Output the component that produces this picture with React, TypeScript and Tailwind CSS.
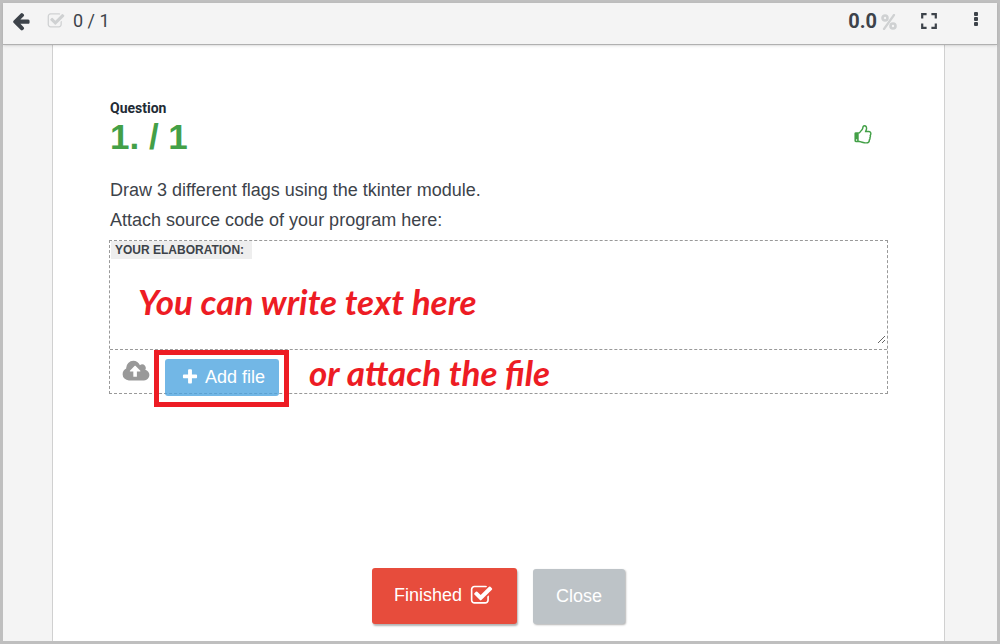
import type { ReactNode } from 'react';

const paths = {
  check:
    'M1472 930v318q0 119-84.5 203.5t-203.5 84.5h-832q-119 0-203.5-84.5t-84.5-203.5v-832q0-119 84.5-203.5t203.5-84.5h832q63 0 117 25 15 7 18 23 3 17-9 29l-49 49q-10 10-23 10-3 0-9-2-23-6-45-6h-832q-66 0-113 47t-47 113v832q0 66 47 113t113 47h832q66 0 113-47t47-113v-254q0-13 9-22l64-64q10-10 23-10 6 0 12 3 20 8 20 29zm231-489l-814 814q-24 24-57 24t-57-24l-430-430q-24-24-24-57t24-57l110-110q24-24 57-24t57 24l263 263 647-647q24-24 57-24t57 24l110 110q24 24 24 57t-24 57z',
  back: 'M1664 896v128q0 53-32.5 90.5t-84.5 37.5h-704l293 294q38 36 38 90t-38 90l-75 76q-37 37-90 37-52 0-91-37l-651-652q-37-37-37-90 0-52 37-91l651-650q38-38 91-38 52 0 90 38l75 74q38 38 38 91t-38 91l-293 293h704q52 0 84.5 37.5t32.5 90.5z',
  thumb:
    'M384 1344q0-26-19-45t-45-19-45 19-19 45 19 45 45 19 45-19 19-45zm1152-576q0-51-39-89.5t-89-38.5h-352q0-58 48-159.5t48-160.5q0-98-32-145t-128-47q-26 26-38 85t-30.5 125.5-59.5 109.5q-22 23-77 91-4 5-23 30t-31.5 41-34.5 42.5-40 44-38.5 35.5-40 27-35.5 9h-32v640h32q13 0 31.5 3t33 6.5 38 11 35 11.5 35.5 12.5 29 10.5q211 73 342 73h121q192 0 192-167 0-26-5-56 30-16 47.5-52.5t17.5-73.5-18-69q53-50 53-119 0-25-10-55.5t-25-47.5q32-1 53.5-47t21.5-81zm128-1q0 89-49 163 9 33 9 69 0 77-38 144 3 21 3 43 0 101-60 178 1 139-85 219.5t-227 80.5h-129q-96 0-189.5-22.5t-216.5-65.5q-116-40-138-40h-288q-53 0-90.5-37.5t-37.5-90.5v-640q0-53 37.5-90.5t90.5-37.5h274q36-24 137-155 58-75 107-128 24-25 35.5-85.5t30.5-126.5 62-108q39-37 90-37 84 0 151 32.5t102 101.5 35 186q0 93-48 192h176q104 0 180 76t76 179z',
  plus: 'M1600 736v192q0 40-28 68t-68 28h-416v416q0 40-28 68t-68 28h-192q-40 0-68-28t-28-68v-416h-416q-40 0-68-28t-28-68v-192q0-40 28-68t68-28h416v-416q0-40 28-68t68-28h192q40 0 68 28t28 68v416h416q40 0 68 28t28 68z',
  cloud:
    'M1216 864q0-14-9-23l-352-352q-9-9-23-9t-23 9l-351 351q-10 12-10 24 0 14 9 23t23 9h224v352q0 13 9.5 22.5t22.5 9.5h192q13 0 22.5-9.5t9.5-22.5v-352h224q13 0 22.5-9.5t9.5-22.5zm640 288q0 159-112.5 271.5t-271.5 112.5h-1088q-185 0-316.5-131.5t-131.5-316.5q0-130 70-240t188-165q-2-30-2-43 0-212 150-362t362-150q156 0 285.5 87t188.5 231q71-62 166-62 106 0 181 75t75 181q0 76-41 138 130 31 213.5 135.5t83.5 238.5z',
};

function Icon({ d, className, viewBox = '0 0 1792 1792' }: { d: string; className: string; viewBox?: string }) {
  return (
    <svg viewBox={viewBox} fill="currentColor" aria-hidden="true" className={className}>
      <path d={d} />
    </svg>
  );
}

function IconButton({ label, children }: { label: string; children: ReactNode }) {
  return (
    <button type="button" aria-label={label} className="flex cursor-pointer items-center">
      {children}
    </button>
  );
}

function Header() {
  return (
    <header className="z-10 flex h-[42px] items-center border-b border-[#b0b0b0] bg-[#f4f4f4] pr-[18px] pb-1.5 pl-2 text-[#3d434a] shadow-sm">
      <IconButton label="Back">
        <Icon d={paths.back} className="size-5" />
      </IconButton>
      <div className="ml-4 flex items-center gap-2 font-[Roboto,sans-serif] text-lg">
        <Icon d={paths.check} className="size-[18px] text-[#cfd1d2]" />
        <span>0 / 1</span>
      </div>
      <div className="ml-auto flex items-center gap-1 font-[Roboto,sans-serif] text-xl font-bold">
        <span>0.0</span>
        <svg viewBox="0 0 16 16" fill="none" stroke="currentColor" aria-label="%" className="mt-0.5 size-4 text-[#cfd1d2]">
          <circle cx="4" cy="4" r="2.500" strokeWidth="2.600" />
          <circle cx="12" cy="12" r="2.500" strokeWidth="2.600" />
          <path d="M13 1 3 15" strokeWidth="2.200" strokeLinecap="round" />
        </svg>
      </div>
      <div className="ml-[23px] flex items-center gap-[35px]">
        <IconButton label="Full screen">
          <svg viewBox="0 0 18 18" fill="none" stroke="currentColor" strokeWidth="2.200" className="size-[18px]">
            <path d="M2.200 6.600V2.200H6.600M11.400 2.200h4.400V6.600M15.800 11.400v4.400H11.400M6.600 15.800H2.200V11.400" />
          </svg>
        </IconButton>
        <IconButton label="More options">
          <svg viewBox="0 0 6 16" fill="currentColor" className="mb-1 h-4 w-[6px]">
            <rect x="1" y="1" width="4" height="4" rx="1" />
            <rect x="1" y="6" width="4" height="4" rx="1" />
            <rect x="1" y="11" width="4" height="4" rx="1" />
          </svg>
        </IconButton>
      </div>
    </header>
  );
}

function Note({ children, className }: { children: ReactNode; className: string }) {
  return (
    <p
      className={`pointer-events-none absolute font-[Lato,sans-serif] text-[35px] leading-10 font-bold whitespace-nowrap text-[#ed1c24] italic ${className}`}
    >
      {children}
    </p>
  );
}

function Elaboration() {
  return (
    <section className="relative mt-[5px] border border-dashed border-[#999]">
      <div className="flex h-[109px] flex-col border-b border-dashed border-[#999] pr-px pb-[5px] pl-px">
        <label
          htmlFor="elaboration"
          className="self-start bg-[#eee] pr-2 pl-1 text-xs leading-[18px] font-bold text-[#3d434a]"
        >
          YOUR ELABORATION:
        </label>
        <textarea id="elaboration" className="min-h-0 w-full flex-1 resize-y bg-transparent px-1 outline-none" />
      </div>
      <div className="flex h-[43px] items-start pl-3 text-[#999]">
        <Icon d={paths.cloud} viewBox="-64 0 1920 1792" className="mt-[9px] h-[25px] w-7" />
        <button
          type="button"
          className="mt-[9px] ml-[15px] flex h-[37px] cursor-pointer items-center gap-1.5 rounded-[3px] bg-[#4aa3df]/78 pr-3.5 pb-0.5 pl-4 text-lg text-white"
        >
          <Icon d={paths.plus} className="size-[18px]" />
          Add file
        </button>
      </div>
      <div className="pointer-events-none absolute top-[109px] left-11 h-[57px] w-[135px] border-5 border-[#ed1c24]" />
      <Note className="top-10 left-7">You can write text here</Note>
      <Note className="top-[111px] left-[199px]">or attach the file</Note>
    </section>
  );
}

export default function App() {
  return (
    <div className="flex min-h-screen flex-col border-3 border-[#bfbfbf] bg-[#f4f4f4] font-['Liberation_Sans',Arial,sans-serif]">
      <Header />
      <main className="mr-[52px] ml-[49px] flex flex-1 flex-col border-x border-[#d0d0d0] bg-white px-14 pt-[55px] pb-[17px] text-[#3d434a]">
        <div className="flex items-center justify-between pr-[15px] pl-px">
          <h1 className="font-bold">
            <span className="block font-[Roboto,sans-serif] text-sm leading-4 text-[#222b35]">Question</span>
            <span className="block text-[35px] leading-[42px] text-[#43a047]">1. / 1</span>
          </h1>
          <button type="button" aria-label="Like question" className="mt-3 cursor-pointer text-[#43a047]">
            <Icon d={paths.thumb} className="size-5" />
          </button>
        </div>
        <div className="mt-[17px] pl-px text-lg leading-[30px]">
          <p>Draw 3 different flags using the tkinter module.</p>
          <p>Attach source code of your program here:</p>
        </div>
        <Elaboration />
        <div className="mt-auto flex items-end justify-center gap-4 text-lg text-white">
          <button
            type="button"
            className="flex h-14 cursor-pointer items-center gap-2 rounded-[3px] bg-[#e74c3c] pr-6 pb-0.5 pl-[22px] shadow-[1px_2px_2px_rgba(0,0,0,0.3)]"
          >
            Finished
            <Icon d={paths.check} className="size-[23px]" />
          </button>
          <button
            type="button"
            className="flex h-[55px] cursor-pointer items-center rounded-[3px] bg-[#bdc3c7] px-[23px] pb-0.5 shadow-[1px_1px_2px_rgba(0,0,0,0.3)]"
          >
            Close
          </button>
        </div>
      </main>
    </div>
  );
}
